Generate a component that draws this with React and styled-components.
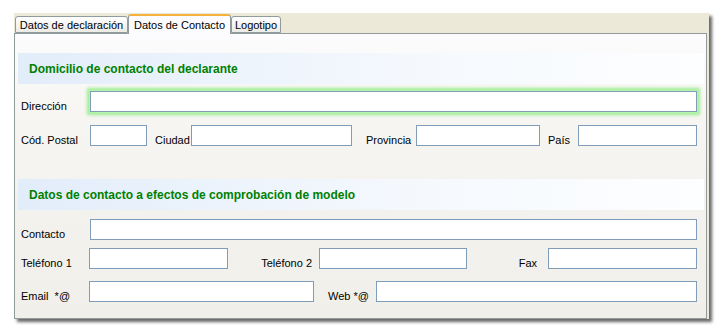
import React from "react";
import styled, { createGlobalStyle } from "styled-components";

const Global = createGlobalStyle`
body {
    margin: 0;
    background: #ffffff;
    font-family: "Liberation Sans", Arial, sans-serif;
    font-size: 11px;
    color: #000000;
}
`;

const Page = styled.div`
width: 723px;
height: 336px;
padding: 13px 0 0 14px;
box-sizing: border-box;
`;

const Window = styled.div`
width: 695px;
height: 306px;
background: #ece9d8;
display: flex;
flex-direction: column;
box-shadow: 3px 3px 3px rgba(0, 0, 0, 0.6);
`;

const TabStrip = styled.div`
height: 20px;
display: flex;
align-items: flex-end;
padding-left: 1px;
`;

const Tab = styled.div`
position: relative;
z-index: ${p => (p.active ? 2 : 1)};
width: ${p => p.w}px;
height: ${p => (p.active ? "20px" : "17px")};
margin-bottom: ${p => (p.active ? "-1px" : "0")};
box-sizing: border-box;
display: flex;
align-items: center;
justify-content: center;
border: 1px solid #919b9c;
border-bottom: ${p => (p.active ? "none" : "1px solid #919b9c")};
border-top: ${p => (p.active ? "2px solid #f3b33d" : "1px solid #919b9c")};
border-radius: 3px 3px 0 0;
background: ${p => (p.active ? "#fcfcfe" : "linear-gradient(#ffffff, #ecebe6)")};
white-space: nowrap;
`;

const Panel = styled.div`
width: 693px;
flex: 1;
box-sizing: border-box;
border: 1px solid #919b9c;
background: linear-gradient(#fcfcfe 0%, #f7f6f3 25%, #f3f2ee 60%, #f1efea 100%);
padding: 19px 0 0 0;
display: flex;
flex-direction: column;
`;

const Band = styled.div`
height: 31px;
margin: ${p => p.top || 0}px 2px 0 3px;
padding-left: 11px;
display: flex;
align-items: center;
background: linear-gradient(to right, #e2edfa, #f4f8fd 55%, #fdfeff);
color: #008000;
font-weight: bold;
font-size: 12px;
`;

const Row = styled.div`
display: flex;
align-items: center;
height: 21px;
margin-top: ${p => p.top}px;
padding-left: 6px;
`;

const Label = styled.span`
width: ${p => p.w}px;
padding: 8px ${p => p.pr || 0}px 0 ${p => p.pl || 0}px;
box-sizing: border-box;
text-align: ${p => (p.right ? "right" : "left")};
white-space: nowrap;
flex-shrink: 0;
`;

const Field = styled.div`
width: ${p => p.w}px;
height: 21px;
box-sizing: border-box;
border: 1px solid #7f9db9;
background: #ffffff;
flex-shrink: 0;
box-shadow: ${p => (p.focus ? "0 0 0 1px #b6f4ad, 0 0 3px 3px #9eed92" : "none")};
`;

export default function App() {
    return (
        <Page>
            <Global />
            <Window>
                <TabStrip>
                    <Tab w={113}>Datos de declaración</Tab>
                    <Tab w={103} active>Datos de Contacto</Tab>
                    <Tab w={50}>Logotipo</Tab>
                </TabStrip>
                <Panel>
                    <Band>Domicilio de contacto del declarante</Band>
                    <Row top={7}>
                        <Label w={69}>Dirección</Label>
                        <Field w={607} focus />
                    </Row>
                    <Row top={13}>
                        <Label w={69}>Cód. Postal</Label>
                        <Field w={57} />
                        <Label w={44} pl={8}>Ciudad</Label>
                        <Field w={161} />
                        <Label w={64} pl={14}>Provincia</Label>
                        <Field w={124} />
                        <Label w={38} pl={8}>País</Label>
                        <Field w={119} />
                    </Row>
                    <Band top={33}>Datos de contacto a efectos de comprobación de modelo</Band>
                    <Row top={9}>
                        <Label w={69}>Contacto</Label>
                        <Field w={607} />
                    </Row>
                    <Row top={8}>
                        <Label w={68}>Teléfono 1</Label>
                        <Field w={139} />
                        <Label w={91} pr={7} right>Teléfono 2</Label>
                        <Field w={148} />
                        <Label w={81} pr={11} right>Fax</Label>
                        <Field w={149} />
                    </Row>
                    <Row top={12}>
                        <Label w={68}>Email &nbsp;*@</Label>
                        <Field w={225} />
                        <Label w={62} pl={14}>Web *@</Label>
                        <Field w={321} />
                    </Row>
                </Panel>
            </Window>
        </Page>
    );
}
